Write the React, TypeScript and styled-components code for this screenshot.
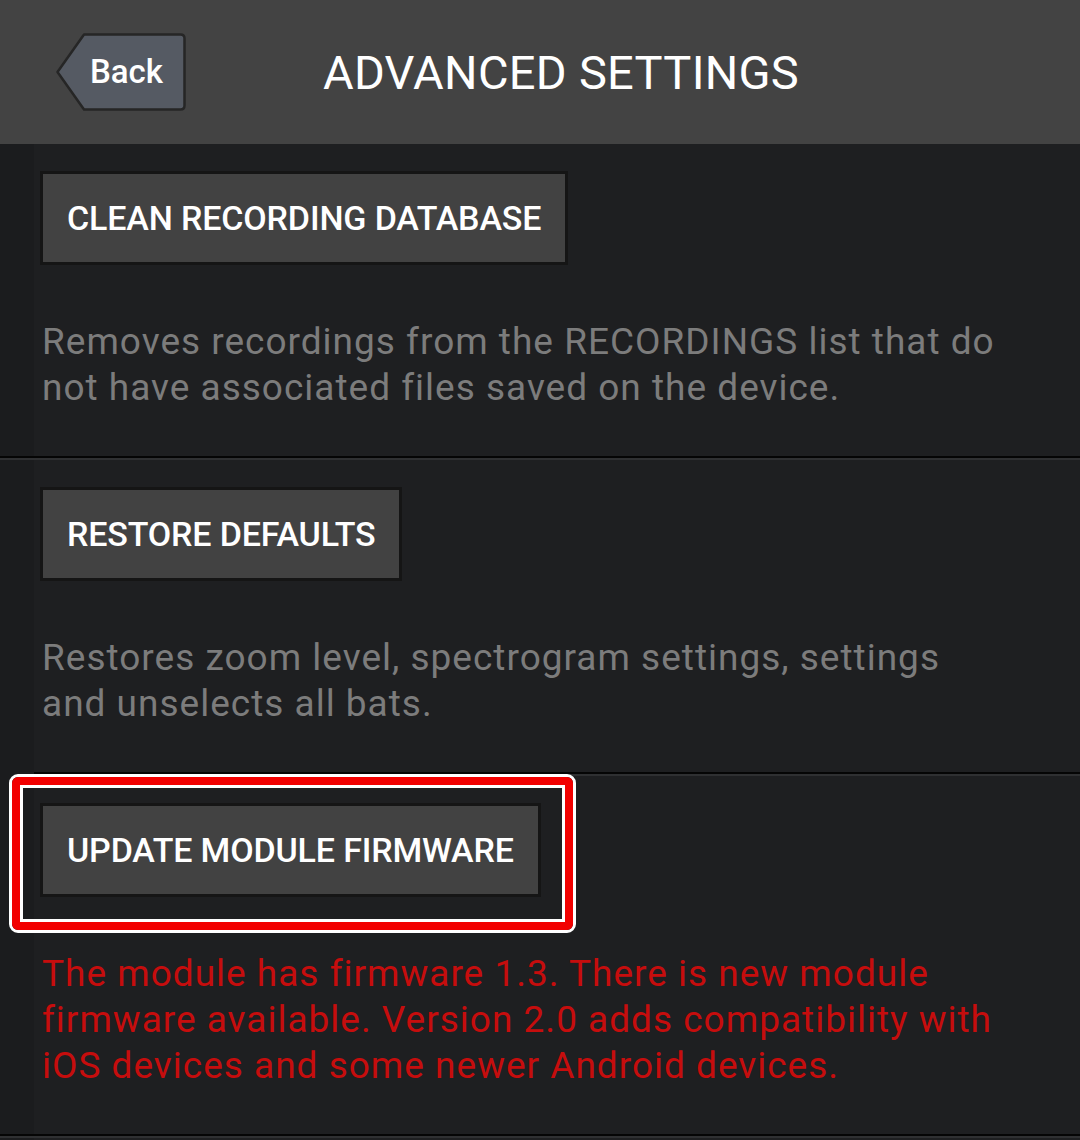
import React from 'react'
import styled, { createGlobalStyle } from 'styled-components'

const GlobalStyle = createGlobalStyle`
  html, body {
    margin: 0;
    padding: 0;
    background: #1e1f21;
  }
  body {
    font-family: Roboto, "Noto Sans", "Liberation Sans", sans-serif;
    -webkit-font-smoothing: antialiased;
  }
`

const Page = styled.div`
  width: 1080px;
  min-height: 1140px;
  background: linear-gradient(to right, #1b1c1e 34px, #1e1f21 34px);
  overflow: hidden;
`

const Header = styled.header`
  height: 144px;
  background: #434343;
  display: flex;
  align-items: center;
  padding-left: 56px;
  box-sizing: border-box;
`

const BackButton = styled.button`
  position: relative;
  width: 130px;
  height: 78px;
  margin-top: -1px;
  padding: 0 0 0 34px;
  border: none;
  background: transparent;
  display: flex;
  align-items: center;
  color: #ffffff;
  font-family: Roboto, sans-serif;
  font-weight: 500;
  font-size: 33px;
  cursor: pointer;

  svg {
    position: absolute;
    left: 0;
    top: 0;
  }

  span {
    position: relative;
  }
`

const Title = styled.h1`
  margin: 0 0 0 137px;
  color: #ffffff;
  font-family: Roboto, sans-serif;
  font-weight: 400;
  font-size: 47px;
  letter-spacing: 0.3px;
`

const Section = styled.section`
  padding: 27px 40px 45px 40px;
  display: flex;
  flex-direction: column;
  align-items: flex-start;
  gap: 54px;
`

const Divider = styled.div<{ $inset?: number }>`
  height: 2px;
  margin-left: ${p => p.$inset || 0}px;
  background: #050505;
  border-bottom: 2px solid #2f3032;
`

const ButtonWrap = styled.div`
  position: relative;
`

const ActionButton = styled.button`
  height: 94px;
  padding: 0 24px;
  box-sizing: border-box;
  border: 3px solid #151515;
  background: #424242;
  color: #ffffff;
  font-family: Roboto, sans-serif;
  font-weight: 500;
  font-size: 34px;
  letter-spacing: -0.15px;
  cursor: pointer;
`

const Highlight = styled.div`
  position: absolute;
  left: -31px;
  top: -29px;
  right: -35px;
  bottom: -36px;
  border: 3px solid #ffffff;
  border-radius: 9px;
  pointer-events: none;

  &::before {
    content: '';
    position: absolute;
    inset: 0;
    border: 8px solid #f20000;
    border-radius: 6px;
  }

  &::after {
    content: '';
    position: absolute;
    inset: 8px;
    border: 3px solid #ffffff;
  }
`

const Description = styled.p<{ $warn?: boolean }>`
  margin: 0 0 0 2px;
  white-space: nowrap;
  font-family: Roboto, sans-serif;
  font-size: 37px;
  line-height: 46px;
  letter-spacing: 1px;
  color: ${p => (p.$warn ? '#c60d0d' : '#7c7c7c')};
`

const BackShape = () => (
  <svg width="130" height="78" viewBox="0 0 130 78">
    <path
      d="M28 1.5 H124.5 Q128.5 1.5 128.5 5.5 V72.5 Q128.5 76.5 124.5 76.5 H28 L1.5 39 Z"
      fill="#555a63"
      stroke="#262626"
      strokeWidth="2.5"
      strokeLinejoin="round"
    />
  </svg>
)

export default function App() {
  return (
    <Page>
      <GlobalStyle />
      <Header>
        <BackButton>
          <BackShape />
          <span>Back</span>
        </BackButton>
        <Title>ADVANCED SETTINGS</Title>
      </Header>

      <Section>
        <ActionButton>CLEAN RECORDING DATABASE</ActionButton>
        <Description>
          Removes recordings from the RECORDINGS list that do
          <br />
          not have associated files saved on the device.
        </Description>
      </Section>
      <Divider />

      <Section>
        <ActionButton>RESTORE DEFAULTS</ActionButton>
        <Description>
          Restores zoom level, spectrogram settings, settings
          <br />
          and unselects all bats.
        </Description>
      </Section>
      <Divider $inset={34} />

      <Section>
        <ButtonWrap>
          <ActionButton>UPDATE MODULE FIRMWARE</ActionButton>
          <Highlight />
        </ButtonWrap>
        <Description $warn>
          The module has firmware 1.3. There is new module
          <br />
          firmware available. Version 2.0 adds compatibility with
          <br />
          iOS devices and some newer Android devices.
        </Description>
      </Section>
      <Divider />
    </Page>
  )
}
